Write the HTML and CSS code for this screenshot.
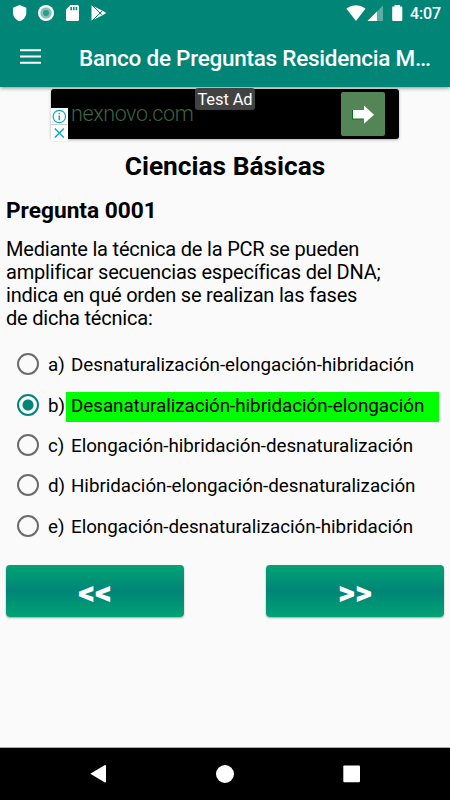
FILE: index.html
```
<!DOCTYPE html>
<html lang="es">
<head>
    <meta charset="UTF-8">
    <title>Banco de Preguntas</title>
    <link rel="stylesheet" href="styles.css">
</head>
<body>
    <div class="screen">
        <header class="header">
            <div class="status-bar">
                <svg class="status-left" width="110" height="27" viewBox="0 0 110 27">
                    <path fill="#fff" d="M19.6 5L26.3 7.8V12.5C26.3 16.5 23.5 20 19.6 21.2C15.7 20 13 16.5 13 12.5V7.8Z"/>
                    <circle cx="46" cy="13" r="8" fill="#fff"/>
                    <circle cx="46" cy="13" r="5.7" fill="#80c3ba"/>
                    <circle cx="46" cy="13" r="3" fill="#2f998b"/>
                    <path fill="#fff" d="M70.5 5H77.5Q79 5 79 6.5V19.5Q79 21 77.5 21H67.5Q66 21 66 19.5V9.5Z"/>
                    <path stroke="#008577" stroke-width="1.5" d="M71.2 7V10.2M73.8 7V10.2M76.4 7V10.2"/>
                    <path fill="#fff" d="M91.5 5.2L102.5 10.8L106.3 13L102.5 15.2L91.5 20.8Z"/>
                    <path fill="none" stroke="#008577" stroke-width="1" d="M92 5L102.5 15.5M92 21L102.5 10.5"/>
                </svg>
                <svg class="status-icons" width="60" height="27" viewBox="0 0 60 27">
                    <path fill="#fff" d="M0.3 8.5Q10 1.8 19.6 8.5L10 21Z"/>
                    <path fill="#59afa5" d="M37 5.5V21H21.5Z"/>
                    <path fill="#fff" d="M31 11.5V21H21.5Z"/>
                    <path fill="#fff" d="M48.5 5H54V6.5H55.5Q56.3 6.5 56.3 7.3V20Q56.3 21 55.3 21H47.2Q46.2 21 46.2 20V7.3Q46.2 6.5 47 6.5H48.5Z"/>
                </svg>
                <span class="clock">4:07</span>
            </div>
            <div class="toolbar">
                <svg class="menu-icon" width="21" height="15" viewBox="0 0 21 15">
                    <path stroke="#fff" stroke-width="2.1" d="M0 1.2H21M0 7.5H21M0 13.8H21"/>
                </svg>
                <div class="title">Banco de Preguntas Residencia M…</div>
            </div>
        </header>

        <div class="ad">
            <div class="ad-marks">
                <svg width="16" height="33" viewBox="0 0 16 33">
                    <path stroke="#ccc" stroke-width="1" d="M0 16.5H16"/>
                    <g fill="none" stroke="#12a5c6" stroke-width="1.2">
                        <circle cx="8.3" cy="8.5" r="6.2"/>
                        <path stroke-width="1.5" d="M8.3 4.7V6.2M8.3 7.4V12.3M3.8 20.5L12.8 29.5M12.8 20.5L3.8 29.5"/>
                    </g>
                </svg>
            </div>
            <span class="ad-link">nexnovo.com</span>
            <span class="ad-label">Test Ad</span>
            <div class="ad-arrow">
                <svg width="22" height="19" viewBox="0 0 22 19">
                    <path fill="#0b7010" d="M0 5H11V14.5H0Z"/>
                    <path fill="#fff" d="M1 5H12V0.5L22 9.8L12 18.7V13.5H1Z"/>
                </svg>
            </div>
        </div>

        <main class="content">
            <h1>Ciencias Básicas</h1>
            <h2>Pregunta 0001</h2>
            <p class="question">Mediante la técnica de la PCR se pueden<br>amplificar secuencias específicas del DNA;<br>indica en qué orden se realizan las fases<br>de dicha técnica:</p>

            <div class="options">
                <div class="option"><i class="radio"></i><span class="letter">a)</span><span class="answer">Desnaturalización-elongación-hibridación</span></div>
                <div class="option"><i class="radio checked"></i><span class="letter">b)</span><span class="answer correct">Desanaturalización-hibridación-elongación</span></div>
                <div class="option"><i class="radio"></i><span class="letter">c)</span><span class="answer">Elongación-hibridación-desnaturalización</span></div>
                <div class="option"><i class="radio"></i><span class="letter">d)</span><span class="answer">Hibridación-elongación-desnaturalización</span></div>
                <div class="option"><i class="radio"></i><span class="letter">e)</span><span class="answer">Elongación-desnaturalización-hibridación</span></div>
            </div>

            <div class="buttons">
                <button>&lt;&lt;</button>
                <button>&gt;&gt;</button>
            </div>
        </main>

        <nav class="nav-bar">
            <svg width="450" height="52" viewBox="0 0 450 52">
                <g fill="#fff">
                    <path d="M90.3 25.7L104.5 17.3Q106 16.5 106 18V33.5Q106 35 104.5 34.2Z"/>
                    <circle cx="225" cy="26" r="9"/>
                    <rect x="343.3" y="17.5" width="16.7" height="16.7" rx="1"/>
                </g>
            </svg>
        </nav>
    </div>
</body>
</html>
```
FILE: styles.css
```
* {
    box-sizing: border-box;
}

body {
    margin: 0;
    font-family: Roboto, sans-serif;
    color: #000;
    background: #fafafa;
}

.screen {
    width: 450px;
    height: 800px;
    display: flex;
    flex-direction: column;
    overflow: hidden;
}

.header {
    height: 87px;
    background: #008577;
    color: #fff;
    box-shadow: 0 1px 4px rgba(0,0,0,0.45);
}

.status-bar {
    height: 27px;
    display: flex;
    align-items: center;
    padding-right: 9px;
}

.status-icons {
    margin-left: auto;
}

.clock {
    width: 31px;
    margin-left: 4px;
    font-size: 16px;
    font-weight: 500;
    letter-spacing: -0.1px;
    white-space: nowrap;
}

.toolbar {
    height: 60px;
    display: flex;
    align-items: center;
    padding-left: 20px;
}

.menu-icon {
    margin-top: -1px;
}

.title {
    margin: 1px 0 0 38px;
    font-size: 22.5px;
    font-weight: 500;
    letter-spacing: -0.25px;
    white-space: nowrap;
}

.ad {
    position: relative;
    display: flex;
    width: 348px;
    height: 50px;
    margin: 2px 0 0 51px;
    flex-shrink: 0;
    background: #000;
    border-radius: 3px;
    box-shadow: 0 1px 3px rgba(0,0,0,0.3);
}

.ad-marks {
    width: 17px;
    height: 33px;
    margin-top: 19px;
    background: #fff;
}

.ad-link {
    margin: 12px 0 0 3px;
    font-size: 21.5px;
    font-weight: 300;
    letter-spacing: -0.4px;
    line-height: 26px;
    color: #3c6440;
}

.ad-label {
    position: absolute;
    left: 144px;
    top: -1px;
    width: 60px;
    height: 22px;
    border-radius: 3px;
    background: #424242;
    color: #fff;
    font-size: 16.5px;
    letter-spacing: -0.1px;
    line-height: 24px;
    text-align: center;
}

.ad-arrow {
    width: 44px;
    height: 44px;
    margin: 3px 14px 0 auto;
    background: #538556;
    border-radius: 2px;
    display: flex;
    align-items: center;
    justify-content: center;
}

.content {
    flex: 1;
    padding: 10px 6px 0;
}

h1 {
    margin: 0;
    font-size: 26.3px;
    line-height: 34px;
    text-align: center;
}

h2 {
    margin: 14px 0 0;
    font-size: 22.7px;
    line-height: 28px;
}

.question {
    margin: 13px 0 0;
    font-size: 20px;
    letter-spacing: -0.2px;
    line-height: 23px;
}

.options {
    margin-top: 14px;
}

.option {
    height: 40.4px;
    display: flex;
    align-items: center;
    padding-left: 11px;
    font-size: 18.8px;
    letter-spacing: -0.03px;
    white-space: nowrap;
}

.radio {
    width: 22px;
    height: 22px;
    border: 2px solid #6b6b6b;
    border-radius: 50%;
}

.radio.checked {
    border-color: #008577;
    background: radial-gradient(circle, #008577 5px, transparent 6px);
}

.letter {
    width: 18px;
    margin: 2px 0 0 9px;
}

.answer {
    margin-top: 3px;
    padding-left: 5px;
    line-height: 29px;
}

.answer.correct {
    width: 373px;
    height: 30px;
    margin-top: 4px;
    background: #00ff00;
}

.buttons {
    display: flex;
    justify-content: space-between;
    margin-top: 19px;
}

button {
    width: 178px;
    height: 52px;
    padding: 4px 0 0;
    border: none;
    border-radius: 4px;
    background: linear-gradient(#00a374, #008577, #00a374);
    box-shadow: 0 1px 2px rgba(0,0,0,0.35);
    color: #fff;
    font-family: Roboto, sans-serif;
    font-size: 33px;
    font-weight: 900;
}

.nav-bar {
    height: 53px;
    border-top: 1px solid #aaa;
    background: #000;
}
```
